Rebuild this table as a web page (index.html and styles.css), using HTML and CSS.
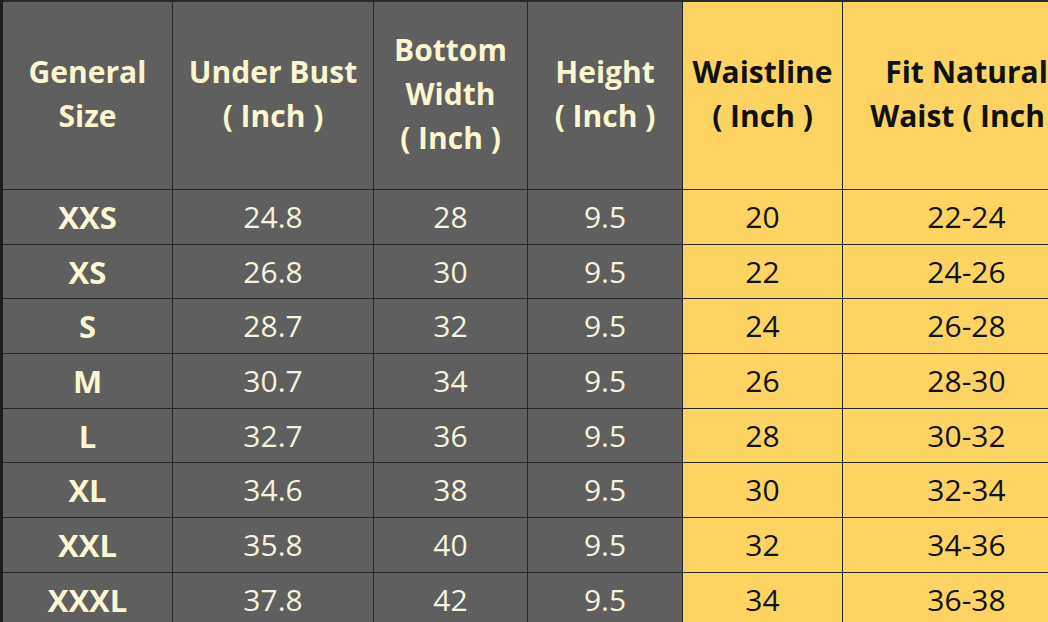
FILE: index.html
```html
<!DOCTYPE html>
<html>
<head>
<meta charset="utf-8">
<link rel="stylesheet" href="styles.css">
</head>
<body>
<div class="frame">
<table class="chart">
<colgroup>
<col class="c1"><col class="c2"><col class="c3"><col class="c4"><col class="c5"><col class="c6">
</colgroup>
<thead>
<tr>
<th class="g">General<br>Size</th>
<th class="g">Under Bust<br>( Inch )</th>
<th class="g">Bottom<br>Width<br>( Inch )</th>
<th class="g">Height<br>( Inch )</th>
<th class="y">Waistline<br>( Inch )</th>
<th class="y">Fit Natural<br>Waist ( Inch )</th>
</tr>
</thead>
<tbody>
<tr><td class="g size">XXS</td><td class="g">24.8</td><td class="g">28</td><td class="g">9.5</td><td class="y">20</td><td class="y">22-24</td></tr>
<tr><td class="g size">XS</td><td class="g">26.8</td><td class="g">30</td><td class="g">9.5</td><td class="y">22</td><td class="y">24-26</td></tr>
<tr><td class="g size">S</td><td class="g">28.7</td><td class="g">32</td><td class="g">9.5</td><td class="y">24</td><td class="y">26-28</td></tr>
<tr><td class="g size">M</td><td class="g">30.7</td><td class="g">34</td><td class="g">9.5</td><td class="y">26</td><td class="y">28-30</td></tr>
<tr><td class="g size">L</td><td class="g">32.7</td><td class="g">36</td><td class="g">9.5</td><td class="y">28</td><td class="y">30-32</td></tr>
<tr><td class="g size">XL</td><td class="g">34.6</td><td class="g">38</td><td class="g">9.5</td><td class="y">30</td><td class="y">32-34</td></tr>
<tr><td class="g size">XXL</td><td class="g">35.8</td><td class="g">40</td><td class="g">9.5</td><td class="y">32</td><td class="y">34-36</td></tr>
<tr><td class="g size">XXXL</td><td class="g">37.8</td><td class="g">42</td><td class="g">9.5</td><td class="y">34</td><td class="y">36-38</td></tr>
</tbody>
</table>
</div>
</body>
</html>
```
FILE: styles.css
```css
html, body {
  margin: 0;
  padding: 0;
  background: #5f5f5f;
}
.frame {
  width: 1048px;
  height: 622px;
  overflow: hidden;
}
.chart {
  border-collapse: collapse;
  table-layout: fixed;
  width: 1089px;
  font-family: "Open Sans", "Noto Sans", sans-serif;
}
.c1 { width: 171px; }
.c2 { width: 201px; }
.c3 { width: 154px; }
.c4 { width: 155px; }
.c5 { width: 160px; }
.c6 { width: 248px; }
.chart th, .chart td {
  border: 1px solid #262626;
  text-align: center;
  vertical-align: middle;
  padding: 0;
}
.chart tr > :first-child {
  border-left: 3px solid #1c1c1c;
}
.chart thead th {
  border-top: 2px solid #2a2a2a;
  height: 184px;
  font-weight: 700;
  font-size: 30px;
  line-height: 44px;
  padding-bottom: 3px;
}
.chart tbody td {
  height: 53.7px;
  font-size: 30px;
  font-weight: 400;
  line-height: 30px;
}
.g {
  background: #5f5f5f;
  color: #f6f3de;
}
thead .g { color: #fbf6cf; }
.y {
  background: #fdd462;
  color: #111111;
}
.chart tbody td.size {
  font-weight: 700;
  font-size: 31px;
  color: #fbf7d4;
}
```
